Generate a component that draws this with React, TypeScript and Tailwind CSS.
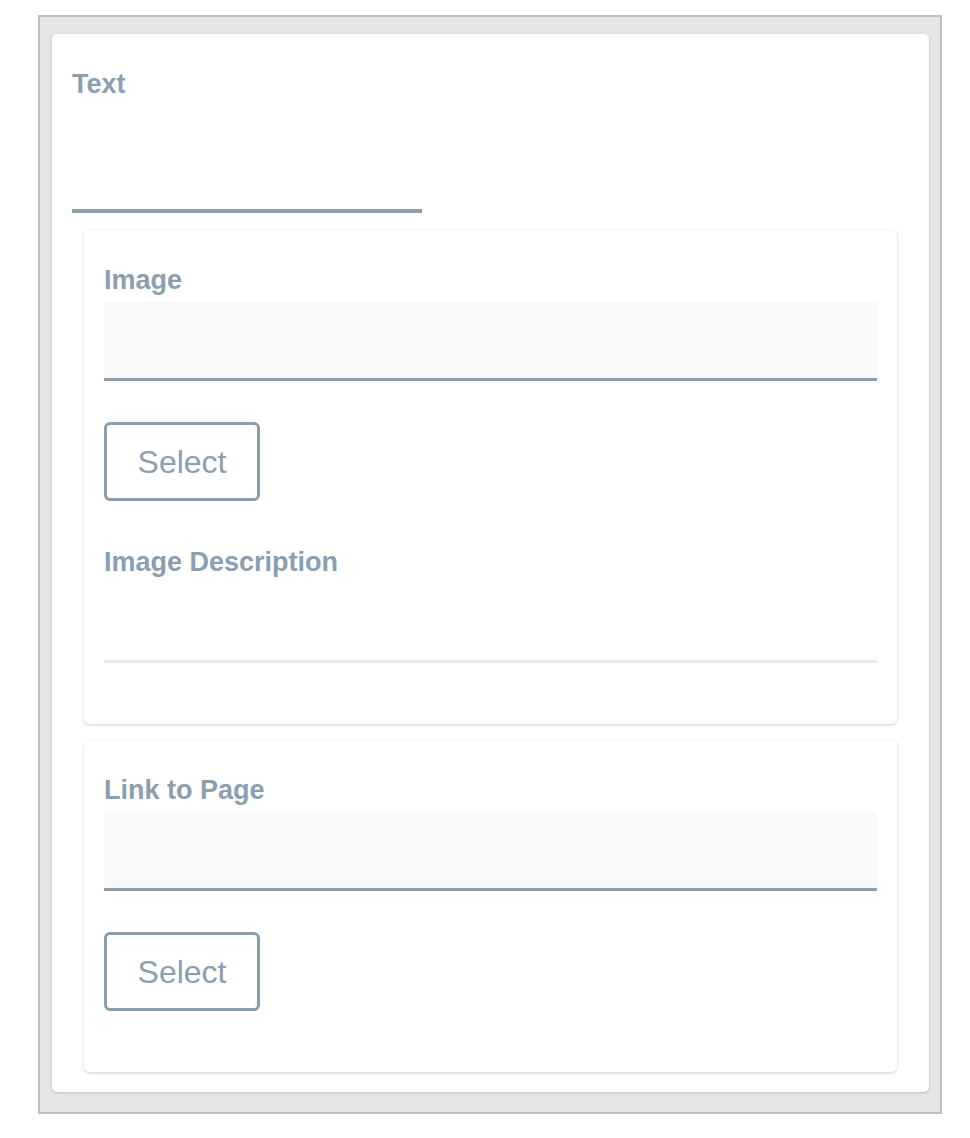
import React from "react";

const label = "block h-[30px] leading-[30px] text-[27px] font-semibold text-[#8a9fb0]";

function SelectButton() {
  return (
    <button className="mt-[41px] flex h-[79px] w-[156px] items-center justify-center rounded-[6px] border-[3px] border-[#8a9eae] bg-white text-[32px] text-[#8a9fb0]">
      Select
    </button>
  );
}

function FilledInput() {
  return <div className="mt-[7px] h-[79px] w-full border-b-[3px] border-[#8a9eae] bg-[#f9f9f9]" />;
}

export default function App() {
  return (
    <div className="min-h-screen bg-white pt-[15px] pl-[38px] font-['Liberation_Sans',Arial,sans-serif]">
      {/* Outer frame */}
      <div className="w-[904px] border-2 border-[#bfbfbf] bg-[#e6e6e6] pt-[17px] pl-[12px] pr-[11px] pb-[20px]">
        {/* Main card */}
        <div className="rounded-[5px] bg-white pt-[35px] pb-[20px] shadow-[0_1px_3px_rgba(0,0,0,0.18)]">
          <div className="px-[20px]">
            <span className={label}>Text</span>
            <div className="mt-[34px] h-[80px] w-[350px] border-b-4 border-[#8a9eae]" />
          </div>

          {/* Image card */}
          <div className="mx-[32px] mt-[17px] rounded-[5px] bg-white px-[20px] pt-[35px] pb-[61px] shadow-[0_1px_3px_rgba(0,0,0,0.2)]">
            <span className={label}>Image</span>
            <FilledInput />
            <SelectButton />
            <span className={`${label} mt-[46px]`}>Image Description</span>
            <div className="mt-[3px] h-[83px] w-full border-b-[3px] border-[#e8ebef]" />
          </div>

          {/* Link card */}
          <div className="mx-[32px] mt-[16px] rounded-[5px] bg-white px-[20px] pt-[35px] pb-[61px] shadow-[0_1px_3px_rgba(0,0,0,0.2)]">
            <span className={label}>Link to Page</span>
            <FilledInput />
            <SelectButton />
          </div>
        </div>
      </div>
    </div>
  );
}
